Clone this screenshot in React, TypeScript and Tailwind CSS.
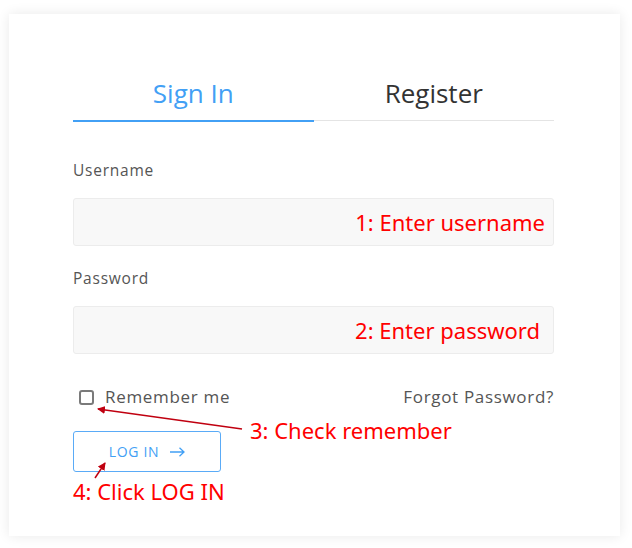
import { useState } from 'react';

const poppins = { fontFamily: '"Open Sans", "Noto Sans", sans-serif' };
const note = { fontFamily: '"Noto Sans", "Liberation Sans", sans-serif' };

export default function App() {
  const [tab, setTab] = useState<'signin' | 'register'>('signin');
  const [remember, setRemember] = useState(false);

  return (
    <div className="w-[632px] h-[548px] bg-white pt-[14px] pl-[9px]">
      <div
        className="relative w-[611px] h-[522px] bg-white shadow-[0_0_12px_rgba(0,0,0,0.09)] pt-[61px] pl-16 pr-[66px]"
        style={poppins}
      >
        {/* tabs */}
        <div className="flex">
          <button
            onClick={() => setTab('signin')}
            className={`flex-1 pb-[9px] text-[26px] leading-[36px] border-b-2 ${
              tab === 'signin' ? 'text-[#42a0f5] border-[#42a0f5]' : 'text-[#333] border-[#e4e4e4]'
            }`}
          >
            Sign In
          </button>
          <button
            onClick={() => setTab('register')}
            className={`flex-1 pb-[9px] text-[26px] leading-[36px] ${
              tab === 'register' ? 'text-[#42a0f5] border-b-2 border-[#42a0f5]' : 'text-[#333] border-b border-[#e4e4e4] mb-px'
            }`}
          >
            Register
          </button>
        </div>

        {/* username */}
        <label className="block mt-[37px] mb-[17px] text-[15.5px] leading-[22px] tracking-[0.05em] text-[#555]">Username</label>
        <div className="h-12 bg-[#f8f8f8] border border-[#ececec] rounded-[3px] flex items-center justify-end pr-[8px]">
          <span className="text-[22px] text-[#ff0000]" style={note}>1: Enter username</span>
        </div>

        {/* password */}
        <label className="block mt-[21px] mb-[17px] text-[15.5px] leading-[22px] tracking-[0.05em] text-[#555]">Password</label>
        <div className="h-12 bg-[#f8f8f8] border border-[#ececec] rounded-[3px] flex items-center justify-end pr-[13px]">
          <span className="text-[22px] text-[#ff0000]" style={note}>2: Enter password</span>
        </div>

        {/* remember row */}
        <div className="flex items-center justify-between mt-[32px] h-[22px] text-[17px] tracking-[0.04em] text-[#555]">
          <label className="flex items-center gap-[11px] cursor-pointer">
            <span
              onClick={() => setRemember(!remember)}
              className={`ml-[6px] w-[15px] h-[15px] rounded-[3px] border-2 border-[#7a7a7a] ${remember ? 'bg-[#42a0f5]' : 'bg-white'}`}
            />
            Remember me
          </label>
          <a>Forgot Password?</a>
        </div>

        <button className="mt-[23px] w-[148px] h-[41px] border border-[#5aabf7] rounded-[3px] text-[14px] tracking-[0.05em] text-[#42a0f5] flex items-center justify-center gap-[11px]">
          LOG IN
          <svg width="15" height="10" viewBox="0 0 15 10" fill="none" stroke="#42a0f5" strokeWidth="1.3">
            <path d="M0 5 H14 M9.5 0.8 L14 5 L9.5 9.2" />
          </svg>
        </button>

        {/* annotations */}
        <span className="absolute left-[241px] top-[400px] text-[22px] leading-[32px] text-[#ff0000]" style={note}>
          3: Check remember
        </span>
        <span className="absolute left-[64px] top-[461px] text-[22px] leading-[32px] text-[#ff0000]" style={note}>
          4: Click LOG IN
        </span>
        <svg className="absolute left-0 top-0 pointer-events-none" width="611" height="522">
          <defs>
            <marker id="ah" markerWidth="8" markerHeight="8" refX="7" refY="4" orient="auto" markerUnits="userSpaceOnUse">
              <path d="M0,0 L8,4 L0,8 Z" fill="#c00010" />
            </marker>
          </defs>
          <line x1="233" y1="415" x2="89" y2="395" stroke="#c00010" strokeWidth="1.5" markerEnd="url(#ah)" />
          <line x1="86" y1="464" x2="96" y2="449" stroke="#c00010" strokeWidth="1.5" markerEnd="url(#ah)" />
        </svg>
      </div>
    </div>
  );
}
